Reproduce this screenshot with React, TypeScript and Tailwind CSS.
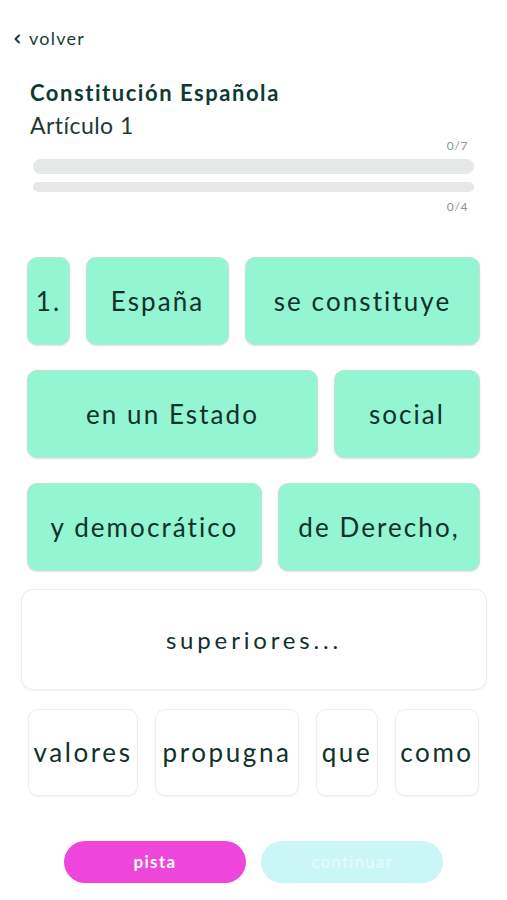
import React from "react";

const font = { fontFamily: "Lato, 'Open Sans', sans-serif" };

function Tile({ w, children }: { w: string; children: React.ReactNode }) {
  return (
    <div
      className={`${w} h-[88px] shrink-0 rounded-[10px] bg-[#93f5d1] border border-[#bfe3d6] shadow-[0_1px_2px_rgba(0,0,0,0.12)] flex items-center justify-center text-[26px] tracking-[0.08em] text-[#12302c]`}
    >
      {children}
    </div>
  );
}

function Word({ w, children }: { w: string; children: React.ReactNode }) {
  return (
    <div
      className={`${w} h-[87px] shrink-0 rounded-[10px] bg-white border border-[#ededed] shadow-[0_1px_2px_rgba(0,0,0,0.05)] flex items-center justify-center text-[26px] tracking-[0.1em] text-[#12302c]`}
    >
      {children}
    </div>
  );
}

export default function App() {
  return (
    <div className="w-[507px] h-[900px] bg-white flex flex-col" style={font}>
      <div className="flex items-center gap-[8px] pl-[13px] pt-[27px] h-[48px] text-[#1c3b37]">
        <svg width="8" height="10" viewBox="0 0 8 10" className="mt-[2px]">
          <path d="M6 1.5 L2.5 5 L6 8.5" fill="none" stroke="#1c3b37" strokeWidth="2" strokeLinecap="round" strokeLinejoin="round" />
        </svg>
        <span className="text-[18px] tracking-[0.07em] leading-none">volver</span>
      </div>

      <div className="pl-[30px] pt-[32px]">
        <div className="text-[22px] font-bold leading-[26px] tracking-[0.07em] text-[#0f3a33]">Constitución Española</div>
        <div className="text-[23px] leading-[28px] tracking-[0.02em] text-[#1d3a36] mt-[5px]">Artículo 1</div>
      </div>

      <div className="px-[33px] w-[507px]">
        <div className="flex justify-end pr-[6px] text-[12px] leading-[14px] text-[#8a9593] tracking-[0.05em]">0/7</div>
        <div className="mt-[6px] h-[15px] rounded-full bg-[#e6e8e8]" />
        <div className="mt-[8px] h-[10px] rounded-full bg-[#e6e8e8]" />
        <div className="flex justify-end pr-[6px] mt-[8px] text-[12px] leading-[14px] text-[#8a9593] tracking-[0.05em]">0/4</div>
      </div>

      <div className="ml-[27px] w-[453px] mt-[43px] flex flex-col gap-[25px]">
        <div className="flex gap-[16px]">
          <Tile w="w-[43px]">1.</Tile>
          <Tile w="w-[143px]">España</Tile>
          <Tile w="w-[235px]">se constituye</Tile>
        </div>
        <div className="flex gap-[16px]">
          <Tile w="w-[291px]">en un Estado</Tile>
          <Tile w="w-[146px]">social</Tile>
        </div>
        <div className="flex gap-[16px]">
          <Tile w="w-[235px]">y democrático</Tile>
          <Tile w="w-[202px]">de Derecho,</Tile>
        </div>
      </div>

      <div className="ml-[21px] w-[466px] h-[101px] mt-[18px] rounded-[12px] bg-white border border-[#ececec] shadow-[0_1px_3px_rgba(0,0,0,0.05)] flex items-center justify-center text-[24px] tracking-[0.16em] text-[#12302c]">
        superiores...
      </div>

      <div className="ml-[28px] w-[451px] mt-[19px] flex gap-[17px]">
        <Word w="w-[110px]">valores</Word>
        <Word w="w-[144px]">propugna</Word>
        <Word w="w-[62px]">que</Word>
        <Word w="w-[84px]">como</Word>
      </div>

      <div className="ml-[64px] mt-[45px] flex gap-[15px]">
        <div className="w-[182px] h-[42px] rounded-full bg-[#ee45da] flex items-center justify-center text-white font-bold text-[17px] tracking-[0.08em]">
          pista
        </div>
        <div className="w-[182px] h-[42px] rounded-full bg-[#cbf6f6] flex items-center justify-center text-[#e4fafa] font-bold text-[17px] tracking-[0.06em]">
          continuar
        </div>
      </div>
    </div>
  );
}
